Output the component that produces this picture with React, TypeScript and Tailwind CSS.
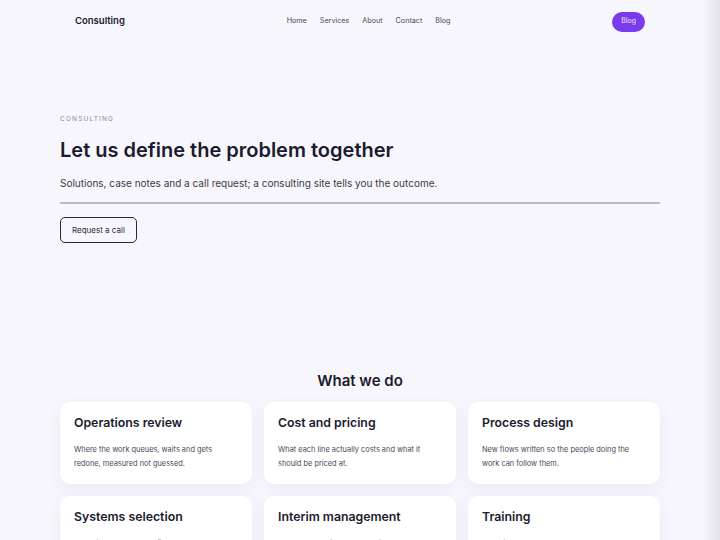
import React from 'react';

export default function App() {
  const services = [
    { title: 'Operations review', body: 'Where the work queues, waits and gets redone, measured not guessed.' },
    { title: 'Cost and pricing', body: 'What each line actually costs and what it should be priced at.' },
    { title: 'Process design', body: 'New flows written so the people doing the work can follow them.' },
    { title: 'Systems selection', body: 'Choosing the tools that fit the work, not the other way round.' },
    { title: 'Interim management', body: 'A steady hand in the seat while the permanent hire is found.' },
    { title: 'Training', body: 'Teaching the team to keep the new way running after we leave.' },
  ];

  return (
    <div
      className="relative min-h-screen bg-[#f8f6fd] text-[#1c1a2e]"
      style={{ fontFamily: 'Inter, "Noto Sans", sans-serif' }}
    >
      <div className="mx-auto w-[600px]">
        <nav className="flex h-[43px] items-center justify-between px-[15px]">
          <span className="text-[9.5px] font-semibold text-[#1c1a2e]">Consulting</span>
          <div className="flex items-center gap-[13px] text-[7.2px] text-[#4a4858]">
            <a>Home</a>
            <a>Services</a>
            <a>About</a>
            <a>Contact</a>
            <a>Blog</a>
          </div>
          <button className="h-[20px] rounded-full bg-[#7c3aed] px-[9px] text-[7px] text-[#ede4ff]">Blog</button>
        </nav>

        <section className="pt-[72px]">
          <p className="text-[6.5px] leading-[8px] tracking-[0.18em] text-[#8a8794]">CONSULTING</p>
          <h1 className="mt-[14px] text-[20px] font-semibold leading-[26px] text-[#1c1a2e]">
            Let us define the problem together
          </h1>
          <p className="mt-[13px] text-[10px] leading-[14px] text-[#3b3a48]">
            Solutions, case notes and a call request; a consulting site tells you the outcome.
          </p>
          <div className="mt-[12px] h-[2px] bg-[#bdb9c6]" />
          <button className="mt-[13px] h-[26px] rounded-[5px] border border-[#2a2838] px-[11px] text-[8px] text-[#2a2838]">
            Request a call
          </button>
        </section>

        <section className="pt-[128px]">
          <h2 className="text-center text-[15px] font-semibold leading-[20px] text-[#1c1a2e]">What we do</h2>
          <div className="mt-[11px] grid grid-cols-3 gap-[12px]">
            {services.map((s) => (
              <div
                key={s.title}
                className="rounded-[10px] bg-white px-[14px] pb-[13px] pt-[13px] shadow-[0_4px_14px_rgba(60,50,100,0.07)]"
              >
                <h3 className="text-[12.3px] font-semibold leading-[16px] text-[#1c1a2e]">{s.title}</h3>
                <p className="mt-[12px] text-[7.4px] leading-[14px] text-[#4a4858]">{s.body}</p>
              </div>
            ))}
          </div>
        </section>
      </div>
      <div className="pointer-events-none absolute right-0 top-0 h-full w-[18px] bg-gradient-to-r from-transparent to-[#e4e2ea]" />
    </div>
  );
}
